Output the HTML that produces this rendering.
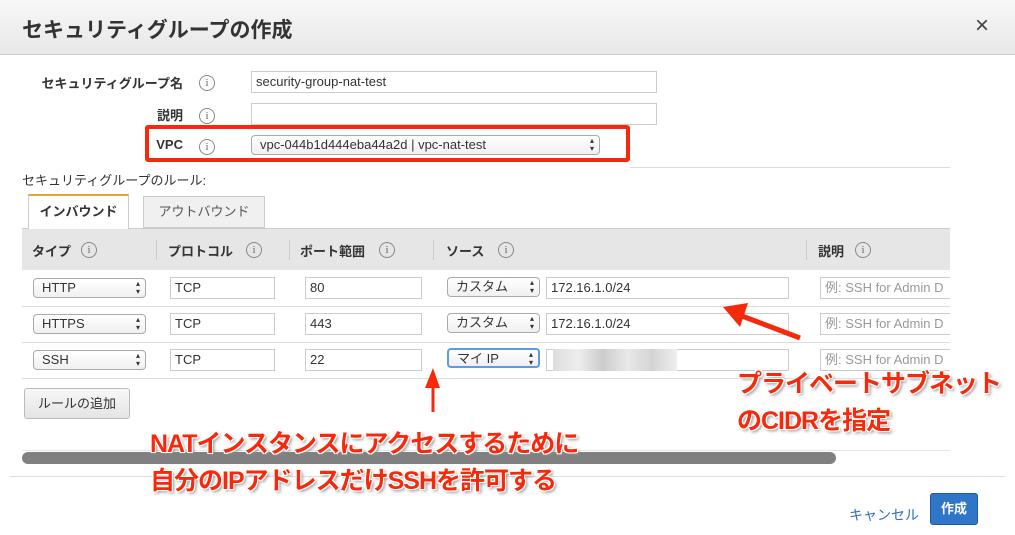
<!DOCTYPE html>
<html><head><meta charset="utf-8"><style>
*{box-sizing:border-box;margin:0;padding:0}
body{width:1015px;height:535px;background:#fff;position:relative;overflow:hidden;font-family:"Liberation Sans","Noto Sans CJK JP",sans-serif;color:#333;font-size:13px}
.a{position:absolute}
.hdr{left:0;top:0;width:1015px;height:55px;background:linear-gradient(#f7f7f7,#e8e8e8);border-bottom:1px solid #ccc}
.lbl{font-weight:bold;font-size:13px;text-align:right}
.i{width:16px;height:16px;border:1px solid #888;border-radius:50%;font-size:11px;text-align:center;line-height:14px;color:#666;font-family:"Liberation Serif",serif}
.in{border:1px solid #ccc;background:#fff;font-size:13px;padding-left:4px;line-height:20px;height:22px}
.sel{border:1px solid #aaa;border-radius:4px;background:linear-gradient(#fff,#f0f0f0);font-size:13px;padding-left:8px;line-height:18px;height:20px}
.sel:after{content:"▴\A▾";white-space:pre;position:absolute;right:5px;top:1px;font-size:8px;line-height:8px;color:#333}
.th{font-weight:bold;font-size:13px;top:241px}
.red{color:#f52a0c;font-weight:bold;font-size:25px;text-shadow:0 0 2px #fff,1px 1px 0 #fff,-1px -1px 0 #fff,1px -1px 0 #fff,-1px 1px 0 #fff,2px 2px 3px #888;white-space:nowrap;letter-spacing:-1px}
</style></head><body>
<div class="a hdr"></div>
<div class="a" style="left:22px;top:14px;font-size:21px;font-weight:bold;color:#333">セキュリティグループの作成</div>
<div class="a" style="left:975px;top:12px;font-size:24px;color:#444">×</div>

<div class="a lbl" style="left:20px;width:163px;top:73px">セキュリティグループ名</div>
<div class="a i" style="left:199px;top:75px">i</div>
<div class="a in" style="left:251px;top:71px;width:406px">security-group-nat-test</div>
<div class="a lbl" style="left:20px;width:163px;top:105px">説明</div>
<div class="a i" style="left:199px;top:108px">i</div>
<div class="a in" style="left:251px;top:103px;width:406px"></div>
<div class="a" style="left:145px;top:125px;width:485px;height:37px;border:4px solid #f52a0c;border-radius:3px"></div>
<div class="a lbl" style="left:20px;width:163px;top:137px">VPC</div>
<div class="a i" style="left:199px;top:139px">i</div>
<div class="a sel" style="left:251px;top:135px;width:349px">vpc-044b1d444eba44a2d | vpc-nat-test</div>
<div class="a" style="left:630px;top:167px;width:320px;height:1px;background:#ddd"></div>
<div class="a" style="left:22px;top:170px;font-size:13px">セキュリティグループのルール:</div>

<div class="a" style="left:28px;top:194px;width:101px;height:35px;border:1px solid #ccc;border-top:2px solid #f0a030;border-bottom:none;background:#fff;font-weight:bold;text-align:center;line-height:32px;z-index:2">インバウンド</div>
<div class="a" style="left:143px;top:196px;width:122px;height:32px;border:1px solid #ccc;background:#f0f0f0;text-align:center;line-height:30px;color:#555">アウトバウンド</div>
<div class="a" style="left:22px;top:228px;width:928px;height:42px;background:#e6e6e6;border-top:1px solid #ccc"></div>
<div class="a" style="left:156px;top:240px;width:1px;height:20px;background:#ccc"></div>
<div class="a" style="left:289px;top:240px;width:1px;height:20px;background:#ccc"></div>
<div class="a" style="left:433px;top:240px;width:1px;height:20px;background:#ccc"></div>
<div class="a" style="left:806px;top:240px;width:1px;height:20px;background:#ccc"></div>
<div class="a th" style="left:32px">タイプ</div><div class="a i" style="left:81px;top:242px">i</div>
<div class="a th" style="left:168px">プロトコル</div><div class="a i" style="left:246px;top:242px">i</div>
<div class="a th" style="left:300px">ポート範囲</div><div class="a i" style="left:379px;top:242px">i</div>
<div class="a th" style="left:446px">ソース</div><div class="a i" style="left:498px;top:242px">i</div>
<div class="a th" style="left:818px">説明</div><div class="a i" style="left:855px;top:242px">i</div>

<div class="a" style="left:22px;top:306px;width:928px;height:1px;background:#ddd"></div>
<div class="a" style="left:22px;top:342px;width:928px;height:1px;background:#ddd"></div>
<div class="a" style="left:22px;top:378px;width:928px;height:1px;background:#ddd"></div>

<div class="a sel" style="left:33px;top:278px;width:113px">HTTP</div>
<div class="a in" style="left:170px;top:277px;width:105px">TCP</div>
<div class="a in" style="left:305px;top:277px;width:117px">80</div>
<div class="a sel" style="left:447px;top:277px;width:93px">カスタム</div>
<div class="a in" style="left:546px;top:277px;width:243px">172.16.1.0/24</div>
<div class="a in" style="left:820px;top:277px;width:140px;color:#999">例: SSH for Admin D</div>

<div class="a sel" style="left:33px;top:314px;width:113px">HTTPS</div>
<div class="a in" style="left:170px;top:313px;width:105px">TCP</div>
<div class="a in" style="left:305px;top:313px;width:117px">443</div>
<div class="a sel" style="left:447px;top:313px;width:93px">カスタム</div>
<div class="a in" style="left:546px;top:313px;width:243px">172.16.1.0/24</div>
<div class="a in" style="left:820px;top:313px;width:140px;color:#999">例: SSH for Admin D</div>

<div class="a sel" style="left:33px;top:350px;width:113px">SSH</div>
<div class="a in" style="left:170px;top:349px;width:105px">TCP</div>
<div class="a in" style="left:305px;top:349px;width:117px">22</div>
<div class="a sel" style="left:447px;top:348px;width:93px;border:2px solid #5b9be8">マイ IP</div>
<div class="a in" style="left:546px;top:349px;width:243px"></div>
<div class="a" style="left:553px;top:349px;width:124px;height:22px;background:linear-gradient(90deg,#ddd,#eee 20%,#ccc 40%,#e8e8e8 60%,#d4d4d4 80%,#eee)"></div>
<div class="a in" style="left:820px;top:349px;width:140px;color:#999">例: SSH for Admin D</div>
<div class="a" style="left:950px;top:228px;width:65px;height:240px;background:#fff"></div>

<div class="a" style="left:24px;top:388px;width:106px;height:31px;border:1px solid #bbb;border-radius:3px;background:linear-gradient(#f8f8f8,#e4e4e4);text-align:center;line-height:29px">ルールの追加</div>

<div class="a" style="left:22px;top:450px;width:928px;height:1px;background:#e6e6e6"></div>
<div class="a" style="left:22px;top:452px;width:814px;height:12px;border-radius:6px;background:#808080"></div>
<div class="a" style="left:10px;top:476px;width:995px;height:1px;background:#ddd"></div>

<div class="a" style="left:849px;top:505px;color:#2f6fba;font-size:14px">キャンセル</div>
<div class="a" style="left:930px;top:493px;width:48px;height:32px;background:#2f76c8;border:1px solid #1f5aa0;border-radius:3px;color:#fff;font-weight:bold;text-align:center;line-height:30px;font-size:13px">作成</div>

<svg class="a" style="left:0;top:0" width="1015" height="535">
<path d="M433 412 L433 385" stroke="#f52a0c" stroke-width="3"/>
<path d="M425 388 L433 368 L440 388 Z" fill="#f52a0c"/>
<path d="M800 338 L742 316" stroke="#f52a0c" stroke-width="5"/>
<path d="M748 303 L723 307 L740 327 Z" fill="#f52a0c"/>
</svg>
<div class="a red" style="left:150px;top:424px">NATインスタンスにアクセスするために</div>
<div class="a red" style="left:150px;top:461px">自分のIPアドレスだけSSHを許可する</div>
<div class="a red" style="left:737px;top:364px">プライベートサブネット</div>
<div class="a red" style="left:737px;top:401px">のCIDRを指定</div>
</body></html>
